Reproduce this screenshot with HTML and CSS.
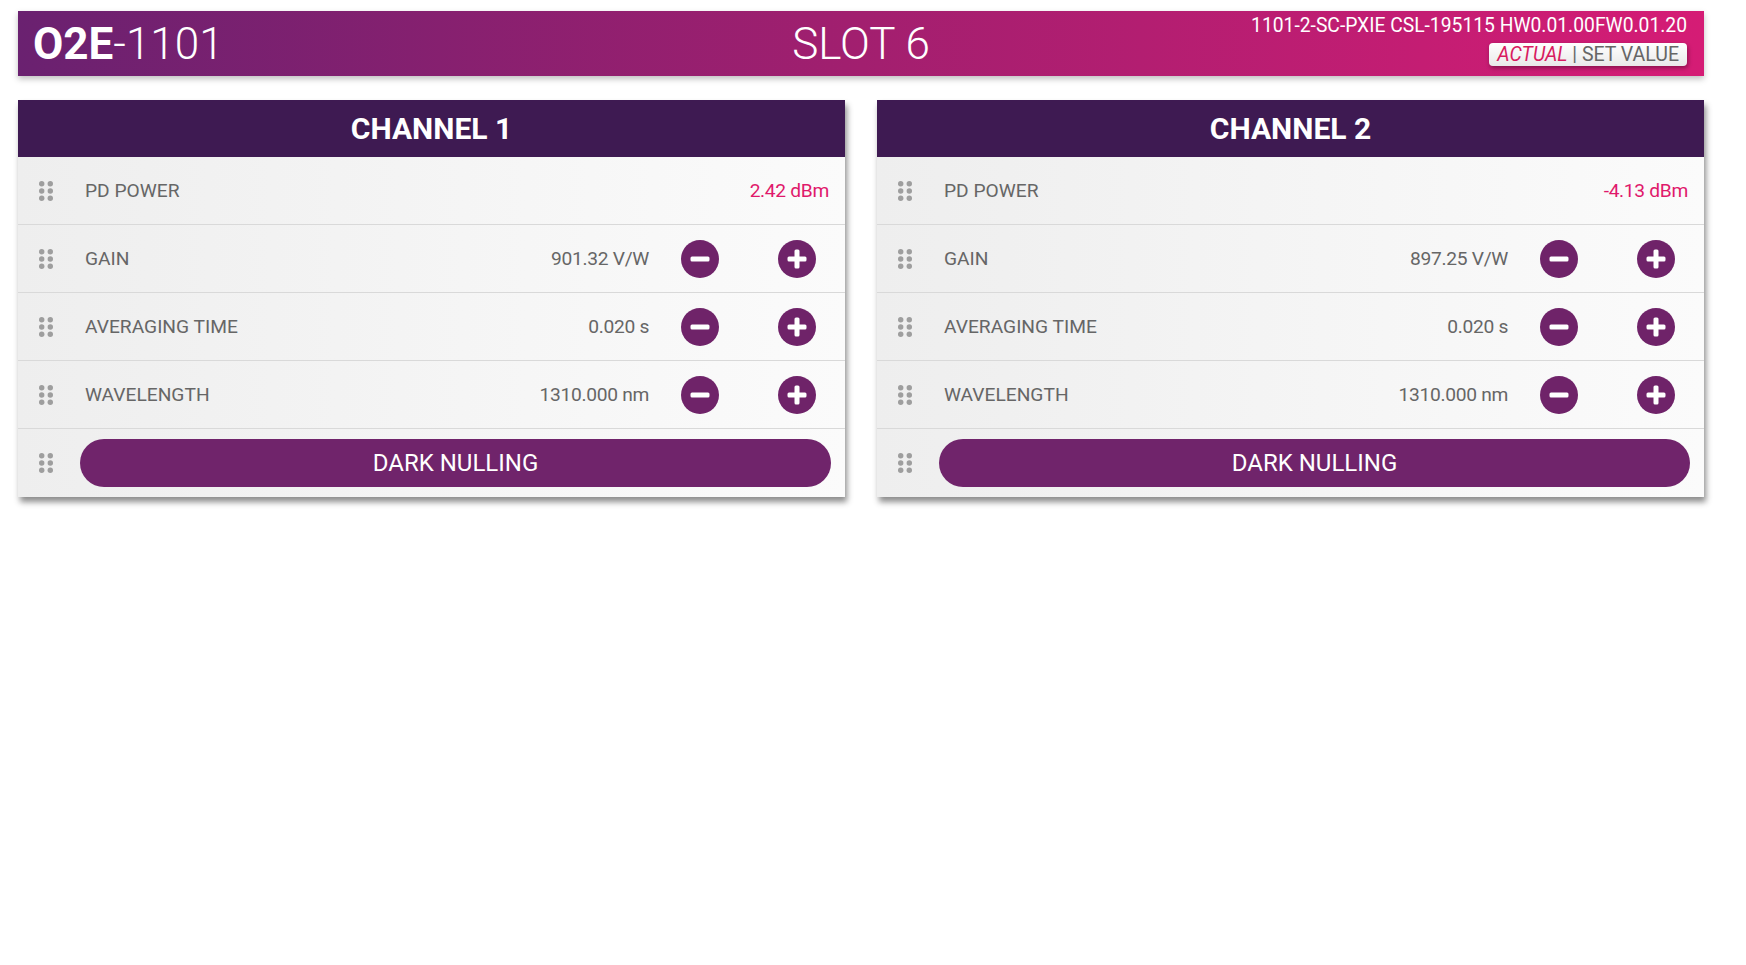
FILE: index.html
```html
<!DOCTYPE html>
<html lang="en">
<head>
    <meta charset="UTF-8">
    <meta name="viewport" content="width=device-width, initial-scale=1.0">
    <title>O2E-1101 Slot 6</title>
    <link rel="stylesheet" href="styles.css">
</head>
<body>
    <div id="page">
        <header id="topbar">
            <div class="device"><b>O2E</b>-1101</div>
            <div class="slot">SLOT 6</div>
            <div class="info">
                <div class="version">1101-2-SC-PXIE CSL-195115 HW0.01.00FW0.01.20</div>
                <div class="mode"><i>ACTUAL</i> | SET VALUE</div>
            </div>
        </header>

        <main id="channels">
            <section class="card">
                <h2>CHANNEL 1</h2>
                <div class="row">
                    <span class="handle"><svg width="14" height="20" viewBox="0 0 14 20"><g fill="#9e9e9e"><circle cx="2.7" cy="2.7" r="2.7"/><circle cx="11.3" cy="2.7" r="2.7"/><circle cx="2.7" cy="10" r="2.7"/><circle cx="11.3" cy="10" r="2.7"/><circle cx="2.7" cy="17.3" r="2.7"/><circle cx="11.3" cy="17.3" r="2.7"/></g></svg></span>
                    <span class="label">PD POWER</span>
                    <span class="value pink">2.42 dBm</span>
                </div>
                <div class="row">
                    <span class="handle"><svg width="14" height="20" viewBox="0 0 14 20"><g fill="#9e9e9e"><circle cx="2.7" cy="2.7" r="2.7"/><circle cx="11.3" cy="2.7" r="2.7"/><circle cx="2.7" cy="10" r="2.7"/><circle cx="11.3" cy="10" r="2.7"/><circle cx="2.7" cy="17.3" r="2.7"/><circle cx="11.3" cy="17.3" r="2.7"/></g></svg></span>
                    <span class="label">GAIN</span>
                    <span class="value">901.32 V/W</span>
                    <button class="round minus"><svg width="38" height="38" viewBox="0 0 38 38"><circle cx="19" cy="19" r="19" fill="#6f2369"/><rect x="9.5" y="16.5" width="19" height="5" rx="1.5" fill="#fff"/></svg></button>
                    <button class="round plus"><svg width="38" height="38" viewBox="0 0 38 38"><circle cx="19" cy="19" r="19" fill="#6f2369"/><rect x="9.5" y="16.5" width="19" height="5" rx="1.5" fill="#fff"/><rect x="16.5" y="9.5" width="5" height="19" rx="1.5" fill="#fff"/></svg></button>
                </div>
                <div class="row">
                    <span class="handle"><svg width="14" height="20" viewBox="0 0 14 20"><g fill="#9e9e9e"><circle cx="2.7" cy="2.7" r="2.7"/><circle cx="11.3" cy="2.7" r="2.7"/><circle cx="2.7" cy="10" r="2.7"/><circle cx="11.3" cy="10" r="2.7"/><circle cx="2.7" cy="17.3" r="2.7"/><circle cx="11.3" cy="17.3" r="2.7"/></g></svg></span>
                    <span class="label">AVERAGING TIME</span>
                    <span class="value">0.020 s</span>
                    <button class="round minus"><svg width="38" height="38" viewBox="0 0 38 38"><circle cx="19" cy="19" r="19" fill="#6f2369"/><rect x="9.5" y="16.5" width="19" height="5" rx="1.5" fill="#fff"/></svg></button>
                    <button class="round plus"><svg width="38" height="38" viewBox="0 0 38 38"><circle cx="19" cy="19" r="19" fill="#6f2369"/><rect x="9.5" y="16.5" width="19" height="5" rx="1.5" fill="#fff"/><rect x="16.5" y="9.5" width="5" height="19" rx="1.5" fill="#fff"/></svg></button>
                </div>
                <div class="row">
                    <span class="handle"><svg width="14" height="20" viewBox="0 0 14 20"><g fill="#9e9e9e"><circle cx="2.7" cy="2.7" r="2.7"/><circle cx="11.3" cy="2.7" r="2.7"/><circle cx="2.7" cy="10" r="2.7"/><circle cx="11.3" cy="10" r="2.7"/><circle cx="2.7" cy="17.3" r="2.7"/><circle cx="11.3" cy="17.3" r="2.7"/></g></svg></span>
                    <span class="label">WAVELENGTH</span>
                    <span class="value">1310.000 nm</span>
                    <button class="round minus"><svg width="38" height="38" viewBox="0 0 38 38"><circle cx="19" cy="19" r="19" fill="#6f2369"/><rect x="9.5" y="16.5" width="19" height="5" rx="1.5" fill="#fff"/></svg></button>
                    <button class="round plus"><svg width="38" height="38" viewBox="0 0 38 38"><circle cx="19" cy="19" r="19" fill="#6f2369"/><rect x="9.5" y="16.5" width="19" height="5" rx="1.5" fill="#fff"/><rect x="16.5" y="9.5" width="5" height="19" rx="1.5" fill="#fff"/></svg></button>
                </div>
                <div class="row action">
                    <span class="handle"><svg width="14" height="20" viewBox="0 0 14 20"><g fill="#9e9e9e"><circle cx="2.7" cy="2.7" r="2.7"/><circle cx="11.3" cy="2.7" r="2.7"/><circle cx="2.7" cy="10" r="2.7"/><circle cx="11.3" cy="10" r="2.7"/><circle cx="2.7" cy="17.3" r="2.7"/><circle cx="11.3" cy="17.3" r="2.7"/></g></svg></span>
                    <button class="wide">DARK NULLING</button>
                </div>
            </section>

            <section class="card">
                <h2>CHANNEL 2</h2>
                <div class="row">
                    <span class="handle"><svg width="14" height="20" viewBox="0 0 14 20"><g fill="#9e9e9e"><circle cx="2.7" cy="2.7" r="2.7"/><circle cx="11.3" cy="2.7" r="2.7"/><circle cx="2.7" cy="10" r="2.7"/><circle cx="11.3" cy="10" r="2.7"/><circle cx="2.7" cy="17.3" r="2.7"/><circle cx="11.3" cy="17.3" r="2.7"/></g></svg></span>
                    <span class="label">PD POWER</span>
                    <span class="value pink">-4.13 dBm</span>
                </div>
                <div class="row">
                    <span class="handle"><svg width="14" height="20" viewBox="0 0 14 20"><g fill="#9e9e9e"><circle cx="2.7" cy="2.7" r="2.7"/><circle cx="11.3" cy="2.7" r="2.7"/><circle cx="2.7" cy="10" r="2.7"/><circle cx="11.3" cy="10" r="2.7"/><circle cx="2.7" cy="17.3" r="2.7"/><circle cx="11.3" cy="17.3" r="2.7"/></g></svg></span>
                    <span class="label">GAIN</span>
                    <span class="value">897.25 V/W</span>
                    <button class="round minus"><svg width="38" height="38" viewBox="0 0 38 38"><circle cx="19" cy="19" r="19" fill="#6f2369"/><rect x="9.5" y="16.5" width="19" height="5" rx="1.5" fill="#fff"/></svg></button>
                    <button class="round plus"><svg width="38" height="38" viewBox="0 0 38 38"><circle cx="19" cy="19" r="19" fill="#6f2369"/><rect x="9.5" y="16.5" width="19" height="5" rx="1.5" fill="#fff"/><rect x="16.5" y="9.5" width="5" height="19" rx="1.5" fill="#fff"/></svg></button>
                </div>
                <div class="row">
                    <span class="handle"><svg width="14" height="20" viewBox="0 0 14 20"><g fill="#9e9e9e"><circle cx="2.7" cy="2.7" r="2.7"/><circle cx="11.3" cy="2.7" r="2.7"/><circle cx="2.7" cy="10" r="2.7"/><circle cx="11.3" cy="10" r="2.7"/><circle cx="2.7" cy="17.3" r="2.7"/><circle cx="11.3" cy="17.3" r="2.7"/></g></svg></span>
                    <span class="label">AVERAGING TIME</span>
                    <span class="value">0.020 s</span>
                    <button class="round minus"><svg width="38" height="38" viewBox="0 0 38 38"><circle cx="19" cy="19" r="19" fill="#6f2369"/><rect x="9.5" y="16.5" width="19" height="5" rx="1.5" fill="#fff"/></svg></button>
                    <button class="round plus"><svg width="38" height="38" viewBox="0 0 38 38"><circle cx="19" cy="19" r="19" fill="#6f2369"/><rect x="9.5" y="16.5" width="19" height="5" rx="1.5" fill="#fff"/><rect x="16.5" y="9.5" width="5" height="19" rx="1.5" fill="#fff"/></svg></button>
                </div>
                <div class="row">
                    <span class="handle"><svg width="14" height="20" viewBox="0 0 14 20"><g fill="#9e9e9e"><circle cx="2.7" cy="2.7" r="2.7"/><circle cx="11.3" cy="2.7" r="2.7"/><circle cx="2.7" cy="10" r="2.7"/><circle cx="11.3" cy="10" r="2.7"/><circle cx="2.7" cy="17.3" r="2.7"/><circle cx="11.3" cy="17.3" r="2.7"/></g></svg></span>
                    <span class="label">WAVELENGTH</span>
                    <span class="value">1310.000 nm</span>
                    <button class="round minus"><svg width="38" height="38" viewBox="0 0 38 38"><circle cx="19" cy="19" r="19" fill="#6f2369"/><rect x="9.5" y="16.5" width="19" height="5" rx="1.5" fill="#fff"/></svg></button>
                    <button class="round plus"><svg width="38" height="38" viewBox="0 0 38 38"><circle cx="19" cy="19" r="19" fill="#6f2369"/><rect x="9.5" y="16.5" width="19" height="5" rx="1.5" fill="#fff"/><rect x="16.5" y="9.5" width="5" height="19" rx="1.5" fill="#fff"/></svg></button>
                </div>
                <div class="row action">
                    <span class="handle"><svg width="14" height="20" viewBox="0 0 14 20"><g fill="#9e9e9e"><circle cx="2.7" cy="2.7" r="2.7"/><circle cx="11.3" cy="2.7" r="2.7"/><circle cx="2.7" cy="10" r="2.7"/><circle cx="11.3" cy="10" r="2.7"/><circle cx="2.7" cy="17.3" r="2.7"/><circle cx="11.3" cy="17.3" r="2.7"/></g></svg></span>
                    <button class="wide">DARK NULLING</button>
                </div>
            </section>
        </main>
    </div>
</body>
</html>
```

FILE: styles.css
```css
body {
    margin: 0;
    font-family: Roboto, "Liberation Sans", sans-serif;
    background-color: white;
    color: #666;
}

#page {
    padding: 11px 42px 20px 18px;
}

#topbar {
    display: grid;
    grid-template-columns: 1fr auto 1fr;
    align-items: center;
    height: 65px;
    background: linear-gradient(to right, #6a2170, #a21f6f 50%, #d51c75);
    color: white;
    box-shadow: 0 3px 6px rgba(0, 0, 0, 0.25);
}

.device {
    padding-left: 15px;
    font-size: 44px;
    font-weight: 300;
}

.device b {
    font-weight: 700;
}

.slot {
    font-size: 44px;
    font-weight: 300;
}

.info {
    align-self: start;
    display: flex;
    flex-direction: column;
    align-items: flex-end;
    padding: 3px 17px 0 0;
}

.version {
    font-size: 19.3px;
}

.mode {
    margin-top: 6px;
    padding: 0 8px;
    height: 23px;
    line-height: 23px;
    font-size: 19.5px;
    color: #666;
    background: linear-gradient(to bottom, #ffffff, #e9e9e9);
    border-radius: 4px;
    box-shadow: 1px 2px 4px rgba(0, 0, 0, 0.35);
}

.mode i {
    color: #d81b60;
}

#channels {
    display: grid;
    grid-template-columns: 1fr 1fr;
    gap: 32px;
    margin-top: 24px;
}

.card {
    align-self: start;
    background-color: #f4f4f4;
    box-shadow: 2px 5px 6px rgba(0, 0, 0, 0.45);
}

.card h2 {
    margin: 0;
    height: 57px;
    line-height: 57px;
    text-align: center;
    font-size: 30px;
    font-weight: 700;
    color: white;
    background-color: #3e1a52;
}

.row {
    display: flex;
    align-items: center;
    height: 67px;
    padding: 0 16px 0 21px;
    font-size: 19.2px;
    background: linear-gradient(to right, #eeeeee, #fbfbfb);
    border-bottom: 1px solid #d9d9d9;
}

.row:has(.round) {
    padding-right: 29px;
}

.row.action {
    height: 48px;
    padding: 10px 14px 10px 21px;
    border-bottom: none;
}

.handle {
    display: flex;
    width: 14px;
    margin-right: 32px;
}

.label {
    flex: 1;
}

.value {
    color: #666;
    letter-spacing: -0.3px;
}

.value.pink {
    color: #e0196b;
}

.round {
    display: flex;
    padding: 0;
    border: none;
    background: none;
    cursor: pointer;
}

.minus {
    margin-left: 32px;
}

.plus {
    margin-left: 59px;
}

.wide {
    flex: 1;
    height: 48px;
    margin-left: -5px;
    border: none;
    border-radius: 24px;
    background-color: #70246b;
    color: white;
    font-family: inherit;
    font-size: 24px;
    cursor: pointer;
}
```
